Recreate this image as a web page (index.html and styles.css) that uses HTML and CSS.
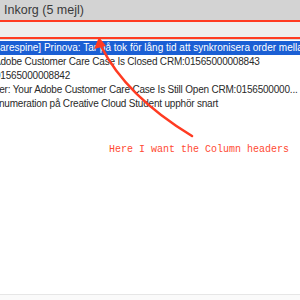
FILE: index.html
```html
<!DOCTYPE html>
<html lang="sv">
<head>
    <meta charset="UTF-8">
    <meta name="viewport" content="width=device-width, initial-scale=1.0">
    <title>Inkorg</title>
    <link rel="stylesheet" href="styles.css">
</head>
<body>
    <div class="window">
        <div class="titlebar">Inkorg (5 mejl)</div>

        <!-- tom kolumnrad -->
        <div class="header-row"></div>

        <div class="list">
            <div class="row selected"><span class="cut c1">[Carespine] Prinova: Tar på tok för lång tid att synkronisera order mellan</span></div>
            <div class="row"><span class="cut c2">Adobe Customer Care Case Is Closed CRM:01565000008843</span></div>
            <div class="row"><span class="cut c3">01565000008842</span></div>
            <div class="row"><span class="cut c4">Reminder: Your Adobe Customer Care Case Is Still Open CRM:0156500000...</span></div>
            <div class="row"><span class="cut c5">Prenumeration på Creative Cloud Student upphör snart</span></div>
        </div>

        <div class="footer"></div>
    </div>

    <!-- markering ovanpå -->
    <div class="mark-box"></div>
    <svg class="annot" width="300" height="300" viewBox="0 0 300 300">
        <path d="M192,136 Q126,96 101,46" fill="none" stroke="#ff3b22" stroke-width="2.6" stroke-linecap="round"/>
        <polygon points="99,37 94,49 106,46" fill="#ff3b22"/>
    </svg>
    <div class="note">Here I want the Column headers</div>
</body>
</html>
```

FILE: styles.css
```css
body {
    margin: 0;
    width: 300px;
    height: 300px;
    overflow: hidden;
    background-color: #ffffff;
    font-family: "Liberation Sans", Arial, sans-serif;
    color: #2a2a2a;
    position: relative;
}

.window {
    display: flex;
    flex-direction: column;
    height: 300px;
}

.titlebar {
    height: 20px;
    background-color: #d3d3d3;
    font-size: 12.5px;
    line-height: 20px;
    padding-left: 4px;
    color: #3a3a3a;
}

.header-row {
    height: 19px;
    background-color: #eeeeee;
    border-bottom: 1px solid #d8d8d8;
}

.list {
    flex: 1;
    padding-top: 1px;
}

.row {
    height: 14px;
    line-height: 14px;
    font-size: 10px;
    white-space: nowrap;
    overflow: hidden;
    letter-spacing: -0.2px;
}

.row.selected {
    background-color: #1b5fd4;
    color: #ffffff;
    letter-spacing: 0;
}

.cut {
    display: inline-block;
}

.c1 { margin-left: -10px; }
.c2 { margin-left: -6px; }
.c3 { margin-left: -5px; }
.c4 { margin-left: -34px; }
.c5 { margin-left: -16px; }

.footer {
    height: 5px;
    border-top: 1px solid #e6e6e6;
    background-color: #fafafa;
}

.mark-box {
    position: absolute;
    left: -3px;
    top: 20px;
    width: 302px;
    height: 15px;
    border: 2px solid #ff3b22;
    pointer-events: none;
}

.annot {
    position: absolute;
    left: 0;
    top: 0;
}

.note {
    position: absolute;
    left: 109px;
    top: 144px;
    font-family: "Liberation Mono", "Courier New", monospace;
    font-size: 10px;
    color: #ff4a32;
    white-space: nowrap;
}
```
